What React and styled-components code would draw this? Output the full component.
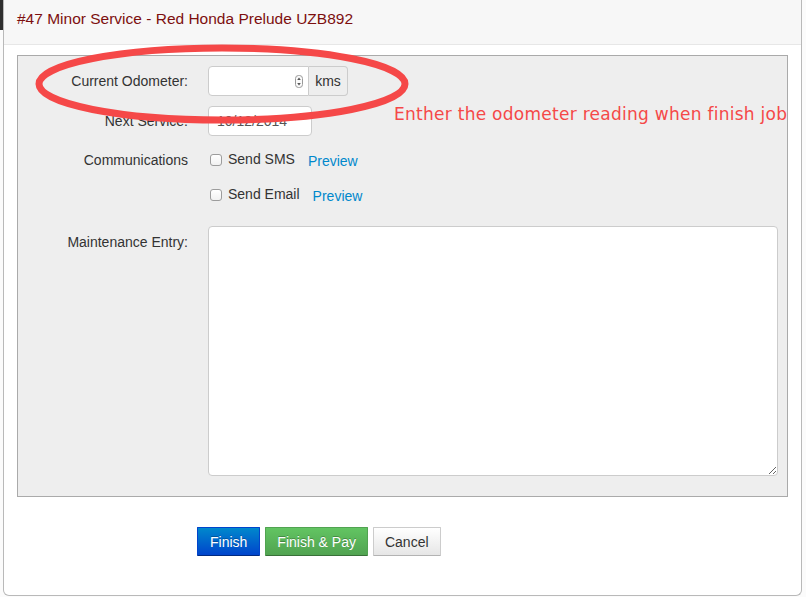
import React from "react"
import styled, { createGlobalStyle } from "styled-components"

const GlobalStyle = createGlobalStyle`
  html, body {
    margin: 0;
    padding: 0;
    background: #fff;
  }
  body {
    font-family: "Liberation Sans", Arial, Helvetica, sans-serif;
    font-size: 14px;
    color: #333;
  }
`

const Spinner = () => (
  <svg width="8" height="13" viewBox="0 0 8 13">
    <rect x="0.5" y="0.5" width="7" height="12" rx="3" fill="#fafafa" stroke="#9a9a9a" />
    <path d="M4 2.6 L5.8 5 H2.2 Z" fill="#555" />
    <path d="M4 10.4 L5.8 8 H2.2 Z" fill="#555" />
  </svg>
)

export default function App() {
  return (
    <Page>
      <GlobalStyle />
      <Modal>
        <Header>
          <Title>#47 Minor Service - Red Honda Prelude UZB892</Title>
        </Header>
        <Body>
          <Fieldset>
            <Row $h={30}>
              <Label>Current Odometer:</Label>
              <InputGroup>
                <NumberBox>
                  <Spinner />
                </NumberBox>
                <AddOn>kms</AddOn>
              </InputGroup>
            </Row>
            <Row $h={30} $mt={10}>
              <Label>Next Service:</Label>
              <TextBox $w={104}>10/12/2014</TextBox>
            </Row>
            <Row $h={28} $mt={10}>
              <Label>Communications</Label>
              <CheckLine>
                <Check type="checkbox" />
                <CheckText>Send SMS</CheckText>
                <Link href="#">Preview</Link>
              </CheckLine>
            </Row>
            <Row $h={28} $mt={7}>
              <span />
              <CheckLine>
                <Check type="checkbox" />
                <CheckText>Send Email</CheckText>
                <Link href="#">Preview</Link>
              </CheckLine>
            </Row>
            <Row $h={250} $mt={17} $top>
              <Label $pt={6}>Maintenance Entry:</Label>
              <TextArea />
            </Row>
          </Fieldset>
          <Footer>
            <Button $variant="primary">Finish</Button>
            <Button $variant="success">Finish &amp; Pay</Button>
            <Button>Cancel</Button>
          </Footer>
        </Body>
      </Modal>

      <Overlay width="806" height="597" viewBox="0 0 806 597">
        <ellipse cx="222" cy="84" rx="183" ry="36" fill="none" stroke="#f54848" strokeWidth="7" />
      </Overlay>
      <Note>Enther the odometer reading when finish job</Note>
    </Page>
  )
}

const Page = styled.div`
  position: relative;
  width: 806px;
  height: 597px;
  overflow: hidden;
  padding-left: 3px;
  box-sizing: border-box;
  background: linear-gradient(#2e2e2e, #2e2e2e) 0 0 / 3px 30px no-repeat, #fbfbfb;
`

const Modal = styled.div`
  width: 799px;
  height: 596px;
  box-sizing: border-box;
  background: #fff;
  border: 1px solid #b9b9b9;
  border-top: none;
  border-radius: 0 0 6px 6px;
  display: flex;
  flex-direction: column;
`

const Header = styled.div`
  height: 44px;
  flex-shrink: 0;
  background: #f7f7f7;
  border-bottom: 1px solid #e7e7e7;
  display: flex;
  align-items: center;
  padding: 0 13px;
`

const Title = styled.h3`
  margin: 0 0 7px 0;
  font-size: 15.5px;
  font-weight: normal;
  color: #7d0f0f;
`

const Body = styled.div`
  padding: 10px 13px 0 13px;
`

const Fieldset = styled.div`
  background: #eee;
  border: 1px solid #aaa;
  padding: 10px 9px 20px 0;
  display: flex;
  flex-direction: column;
`

const Row = styled.div`
  display: grid;
  grid-template-columns: 170px 1fr;
  column-gap: 20px;
  height: ${p => p.$h}px;
  margin-top: ${p => p.$mt || 0}px;
  align-items: ${p => (p.$top ? "start" : "center")};
`

const Label = styled.label`
  text-align: right;
  font-size: 14px;
  line-height: 20px;
  color: #333;
  padding-top: ${p => p.$pt || 0}px;
`

const InputGroup = styled.div`
  display: flex;
  height: 30px;
`

const NumberBox = styled.div`
  width: 101px;
  box-sizing: border-box;
  background: #fff;
  border: 1px solid #ccc;
  border-radius: 4px 0 0 4px;
  display: flex;
  align-items: center;
  justify-content: flex-end;
  padding-right: 5px;
  padding-top: 1px;
`

const AddOn = styled.span`
  width: 39px;
  box-sizing: border-box;
  border: 1px solid #ccc;
  border-left: none;
  border-radius: 0 4px 4px 0;
  background: #eee;
  display: flex;
  align-items: center;
  justify-content: center;
  font-size: 14px;
  color: #333;
`

const TextBox = styled.div`
  width: ${p => p.$w}px;
  height: 30px;
  box-sizing: border-box;
  background: #fff;
  border: 1px solid #ccc;
  border-radius: 4px;
  padding: 0 8px;
  display: flex;
  align-items: center;
  font-size: 14px;
  color: #555;
`

const CheckLine = styled.div`
  display: flex;
  align-items: center;
`

const Check = styled.input`
  appearance: none;
  width: 12px;
  height: 12px;
  margin: 0 6px 0 2px;
  border: 1px solid #9c9c9c;
  border-radius: 3px;
  background: linear-gradient(#fff, #f1f1f1);
`

const CheckText = styled.span`
  font-size: 14px;
  color: #333;
  margin-bottom: 2px;
`

const Link = styled.a`
  margin-left: 13px;
  margin-top: 2px;
  font-size: 14px;
  color: #0088cc;
  text-decoration: none;
`

const TextArea = styled.textarea`
  width: 570px;
  height: 250px;
  box-sizing: border-box;
  border: 1px solid #ccc;
  border-radius: 4px;
  background: #fff;
  font-family: inherit;
  resize: both;
`

const Footer = styled.div`
  display: flex;
  gap: 5px;
  margin-top: 30px;
  padding-left: 180px;
`

const variants = {
  primary: `
    color: #fff;
    background: linear-gradient(#0088cc, #0044cc);
    border-color: #0044cc #0044cc #002a80;
    text-shadow: 0 -1px 0 rgba(0,0,0,0.25);
  `,
  success: `
    color: #fff;
    background: linear-gradient(#62c462, #51a351);
    border-color: #51a351 #51a351 #387038;
    text-shadow: 0 -1px 0 rgba(0,0,0,0.25);
  `,
  default: `
    color: #333;
    background: linear-gradient(#ffffff, #e6e6e6);
    border-color: #cccccc #cccccc #b3b3b3;
  `,
}

const Button = styled.button`
  height: 29px;
  padding: 0 ${p => (p.$variant === "primary" ? 12 : 11)}px;
  font-family: "Liberation Sans", Arial, sans-serif;
  font-size: 14px;
  border: 1px solid;
  border-radius: 1px;
  cursor: pointer;
  ${p => variants[p.$variant || "default"]}
`

const Overlay = styled.svg`
  position: absolute;
  left: 0;
  top: 0;
  pointer-events: none;
`

const Note = styled.div`
  position: absolute;
  left: 394px;
  top: 104px;
  font-family: "DejaVu Sans", sans-serif;
  font-size: 17px;
  letter-spacing: 0.27px;
  color: #f54848;
  white-space: nowrap;
`
